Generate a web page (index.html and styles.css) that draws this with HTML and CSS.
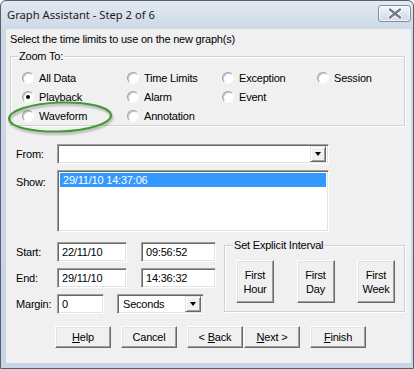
FILE: index.html
```html
<!DOCTYPE html>
<html lang="en">
<head>
    <meta charset="UTF-8">
    <meta name="viewport" content="width=device-width, initial-scale=1.0">
    <title>Graph Assistant - Step 2 of 6</title>
    <link rel="stylesheet" href="styles.css">
</head>
<body>
    <div class="window">
        <div class="titlebar">
            <span class="title">Graph Assistant - Step 2 of 6</span>
            <button class="close-btn" title="Close">
                <svg width="14" height="11" viewBox="0 0 14 11">
                    <path d="M2 1.5 L12 9.5 M12 1.5 L2 9.5" stroke="#fff" stroke-width="4.4" stroke-linecap="round"/>
                    <path d="M2 1.5 L12 9.5 M12 1.5 L2 9.5" stroke="#6f7b8b" stroke-width="2.4" stroke-linecap="round"/>
                </svg>
            </button>
        </div>

        <div class="client">
            <p class="intro">Select the time limits to use on the new graph(s)</p>

            <fieldset class="group zoom-group">
                <legend>Zoom To:</legend>
                <div class="radio-grid">
                    <label class="radio"><span class="radio-box"></span>All Data</label>
                    <label class="radio"><span class="radio-box"></span>Time Limits</label>
                    <label class="radio"><span class="radio-box"></span>Exception</label>
                    <label class="radio"><span class="radio-box"></span>Session</label>
                    <label class="radio"><span class="radio-box checked"></span>Playback</label>
                    <label class="radio"><span class="radio-box"></span>Alarm</label>
                    <label class="radio"><span class="radio-box"></span>Event</label>
                    <span></span>
                    <label class="radio"><span class="radio-box"></span>Waveform</label>
                    <label class="radio"><span class="radio-box"></span>Annotation</label>
                </div>
            </fieldset>

            <div class="form-row">
                <span class="field-label">From:</span>
                <div class="combo wide">
                    <span class="combo-text"></span>
                    <span class="drop-btn"><span class="arrow"></span></span>
                </div>
            </div>

            <div class="form-row top">
                <span class="field-label show-label">Show:</span>
                <div class="listbox">
                    <div class="list-item selected">29/11/10 14:37:06</div>
                </div>
            </div>

            <div class="lower">
                <div class="times">
                    <div class="form-row tight">
                        <span class="field-label">Start:</span>
                        <span class="textbox date">22/11/10</span>
                        <span class="textbox time">09:56:52</span>
                    </div>
                    <div class="form-row tight">
                        <span class="field-label">End:</span>
                        <span class="textbox date">29/11/10</span>
                        <span class="textbox time">14:36:32</span>
                    </div>
                    <div class="form-row tight">
                        <span class="field-label">Margin:</span>
                        <span class="textbox margin">0</span>
                        <div class="combo units">
                            <span class="combo-text">Seconds</span>
                            <span class="drop-btn"><span class="arrow"></span></span>
                        </div>
                    </div>
                </div>

                <fieldset class="group interval-group">
                    <legend>Set Explicit Interval</legend>
                    <div class="interval-buttons">
                        <button class="btn tall">First<br>Hour</button>
                        <button class="btn tall">First<br>Day</button>
                        <button class="btn tall">First<br>Week</button>
                    </div>
                </fieldset>
            </div>

            <div class="button-bar">
                <button class="btn"><u>H</u>elp</button>
                <button class="btn">Cancel</button>
                <div class="nav-pair">
                    <button class="btn">&lt; <u>B</u>ack</button>
                    <button class="btn"><u>N</u>ext &gt;</button>
                </div>
                <button class="btn"><u>F</u>inish</button>
            </div>

            <!-- annotation ring drawn over the screenshot -->
            <svg class="highlight" width="112" height="38" viewBox="0 0 112 38">
                <ellipse cx="55" cy="18" rx="51" ry="14.5" transform="rotate(-2 55 18)" fill="none" stroke="#3f9a2f" stroke-width="2"/>
            </svg>
        </div>
    </div>
</body>
</html>
```

FILE: styles.css
```css
* {
    box-sizing: border-box;
}
body {
    margin: 0;
    font-family: "Liberation Sans", Arial, sans-serif;
    font-size: 11px;
    letter-spacing: -0.2px;
    color: #000;
    background: #fff;
}
.window {
    width: 414px;
    height: 369px;
    display: flex;
    flex-direction: column;
    border: 1px solid #56606e;
    border-radius: 6px 6px 0 0;
    background: linear-gradient(#e2e9f2, #ccd8e6 30px, #c7d4e3);
    padding: 0 2px 5px 5px;
}
.titlebar {
    height: 28px;
    display: flex;
    justify-content: space-between;
}
.title {
    font-family: "Noto Sans", "Liberation Sans", sans-serif;
    font-size: 11.2px;
    letter-spacing: 0;
    line-height: 28px;
    padding-left: 1px;
    color: #1a1a1a;
}
.close-btn {
    width: 33px;
    height: 17px;
    margin-top: 4px;
    padding: 0;
    border: 1px solid #7f8da1;
    border-radius: 3px;
    background: linear-gradient(#f4f7fb, #dde5ef 50%, #d0dae7);
    box-shadow: inset 0 0 0 1px rgba(255,255,255,0.7);
    display: flex;
    align-items: center;
    justify-content: center;
}
.client {
    flex: 1;
    position: relative;
    background: #f0f0f0;
    padding: 4px 6px 0 4px;
}
.intro {
    margin: 0;
    line-height: 13px;
}

/* group boxes */
.group {
    margin: 0;
    padding: 0;
    border: 1px solid #d0d0d0;
    box-shadow: inset 1px 1px 0 #fff, 1px 1px 0 #fff;
    min-width: 0;
}
.group legend {
    padding: 0 1px;
    line-height: 13px;
    background: #f0f0f0;
}
.zoom-group {
    margin-top: 4px;
}
.zoom-group legend {
    margin-left: 7px;
}
.radio-grid {
    display: grid;
    grid-template-columns: 105px 95px 95px 1fr;
    grid-auto-rows: 19px;
    margin-top: 5px;
    padding-left: 11px;
}
.radio {
    display: flex;
    align-items: center;
    gap: 5px;
}
.radio-box {
    width: 12px;
    height: 12px;
    border-radius: 50%;
    background: #fff;
    border: 1px solid;
    border-color: #a0a0a0 #fafafa #fafafa #a0a0a0;
    box-shadow: inset 1px 1px 0 #c8c8c8;
    display: flex;
    align-items: center;
    justify-content: center;
}
.radio-box.checked::after {
    content: "";
    width: 4px;
    height: 4px;
    border-radius: 50%;
    background: #000;
}

/* form rows */
.form-row {
    display: flex;
    align-items: center;
    padding-left: 6px;
    margin-top: 6px;
}
.form-row.top {
    align-items: flex-start;
}
.form-row.tight {
    margin-top: 6px;
}
.form-row.tight:first-child {
    margin-top: 0;
}
.zoom-group + .form-row {
    margin-top: 18px;
}
.field-label {
    width: 41px;
    flex-shrink: 0;
}
.show-label {
    padding-top: 6px;
}
.textbox,
.combo,
.listbox {
    height: 20px;
    background: #fff;
    border: 1px solid;
    border-color: #a0a0a0 #fff #fff #a0a0a0;
    box-shadow: inset 1px 1px 0 #696969, inset -1px -1px 0 #e3e3e3;
}
.textbox {
    display: flex;
    align-items: center;
    padding-left: 4px;
}
.textbox.date {
    width: 70px;
}
.textbox.time {
    width: 75px;
    margin-left: 14px;
}
.textbox.margin {
    width: 47px;
}
.combo {
    display: flex;
    align-items: center;
    justify-content: space-between;
    padding: 2px;
}
.combo.wide {
    width: 272px;
}
.combo.units {
    width: 87px;
    margin-left: 13px;
}
.combo-text {
    padding-left: 3px;
}
.drop-btn {
    width: 16px;
    height: 16px;
    background: #f0f0f0;
    border: 1px solid;
    border-color: #e3e3e3 #696969 #696969 #e3e3e3;
    box-shadow: inset 1px 1px 0 #fff, inset -1px -1px 0 #a0a0a0;
    display: flex;
    align-items: center;
    justify-content: center;
}
.arrow {
    width: 0;
    height: 0;
    border-left: 3.5px solid transparent;
    border-right: 3.5px solid transparent;
    border-top: 4px solid #000;
}
.listbox {
    width: 272px;
    height: 62px;
    padding: 2px;
}
.list-item {
    height: 14px;
    line-height: 14px;
    padding-left: 3px;
}
.list-item.selected {
    background: #3399ff;
    color: #fff;
}

/* lower block */
.lower {
    display: flex;
    align-items: flex-start;
    margin-top: 7px;
}
.times {
    padding-top: 3px;
}
.interval-group {
    width: 181px;
    margin-left: 8px;
    padding: 8px 9px 8px 11px;
}
.interval-group legend {
    margin-left: -3px;
}
.interval-buttons {
    display: flex;
    justify-content: space-between;
}

/* buttons */
.btn {
    font-family: inherit;
    font-size: 11px;
    letter-spacing: inherit;
    color: #000;
    width: 56px;
    height: 22px;
    padding: 0;
    background: #f0f0f0;
    border: 1px solid;
    border-color: #fff #696969 #696969 #fff;
    box-shadow: inset -1px -1px 0 #a0a0a0, inset 1px 1px 0 #e3e3e3;
}
.btn.tall {
    width: 38px;
    height: 43px;
    line-height: 14px;
}
.button-bar {
    display: flex;
    gap: 10px;
    margin-top: 12px;
    padding-left: 45px;
}
.nav-pair {
    display: flex;
    gap: 1px;
}
.highlight {
    position: absolute;
    left: -1px;
    top: 70px;
    filter: drop-shadow(1px 2px 1px rgba(0,0,0,0.3));
}
```
